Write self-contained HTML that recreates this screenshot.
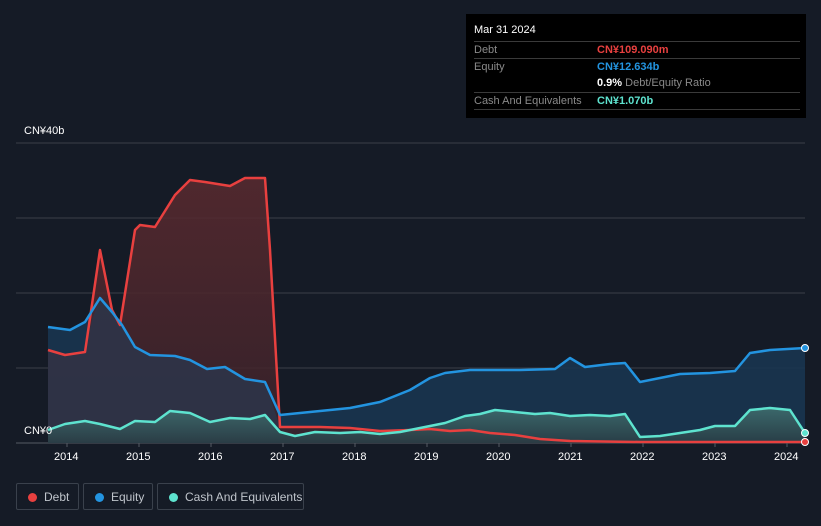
<!DOCTYPE html>
<html><head><meta charset="utf-8"><style>
body{margin:0;width:821px;height:526px;background:#151b26;font-family:"Liberation Sans",sans-serif;overflow:hidden;position:relative}
.tt{position:absolute;left:466px;top:14px;width:340px;height:104px;background:#000;color:#fff;font-size:11px}
.r{position:absolute;left:8px;right:6px;border-top:1px solid #3a3a3a;height:17px;line-height:17px;color:#8a8a8a}
.r span{position:absolute;left:123px;font-weight:bold}
.leg{position:absolute;top:483px;height:27px;border:1px solid #3a414c;border-radius:2px;color:#bfc4cb;font-size:12px;line-height:27px;box-sizing:border-box}
.leg i{position:absolute;left:11px;top:9px;width:9px;height:9px;border-radius:50%}
.leg b{font-weight:normal;position:absolute;left:27px}
.ax{position:absolute;color:#fff;font-size:11px}
</style></head><body>
<svg width="821" height="526" style="position:absolute;left:0;top:0">
<defs>
<linearGradient id="gd" x1="0" y1="0" x2="0" y2="1"><stop offset="0" stop-color="#5a2a2f"/><stop offset="1" stop-color="#3a222a"/></linearGradient>
<linearGradient id="gc" x1="0" y1="0" x2="0" y2="1"><stop offset="0" stop-color="#3f6e6e"/><stop offset="1" stop-color="#2a3e46"/></linearGradient>
</defs>
<g stroke="#3a3f48" stroke-width="1"><line x1="16" y1="143" x2="805" y2="143"/><line x1="16" y1="218" x2="805" y2="218"/><line x1="16" y1="293" x2="805" y2="293"/><line x1="16" y1="368" x2="805" y2="368"/><line x1="16" y1="443" x2="805" y2="443" stroke="#555b64"/></g>
<path fill="#183550" opacity="0.9" d="M48,327 L70,330 85,322 100,298 112,312 122,325 135,347 150,355 175,356 190,360 207,369 225,367 245,379 265,382 280,415 310,412 350,408 380,402 410,390 430,378 445,373 470,370 490,370 520,370 555,369 570,358 585,367 610,364 625,363 640,382 660,378 680,374 710,373 735,371 750,353 770,350 805,348 L805,443 48,443Z"/>
<path fill="url(#gd)" opacity="0.85" d="M48,350 L65,355 85,352 100,250 112,310 120,325 135,230 140,225 155,227 175,195 190,180 205,182 230,186 245,178 265,178 270,250 280,427 320,427 350,428 380,431 410,430 430,429 450,431 470,430 490,433 515,435 540,439 570,441 640,442 805,442 L805,443 48,443Z"/>
<path fill="#2e3448" opacity="0.9" d="M48,350 L65,355 85,352 92,320 100,298 112,312 122,325 135,347 150,355 175,356 190,360 207,369 225,367 245,379 265,382 280,427 L280,443 48,443Z"/>
<path fill="url(#gc)" opacity="0.9" d="M48,430 L65,424 85,421 100,424 120,429 135,421 155,422 170,411 190,413 210,422 230,418 250,419 265,415 280,432 295,436 315,432 340,433 360,432 380,434 400,432 420,428 445,423 465,416 480,414 495,410 515,412 535,414 550,413 570,416 590,415 610,416 625,414 640,437 660,436 680,433 700,430 715,426 735,426 750,410 770,408 790,410 805,433 L805,443 48,443Z"/>
<g fill="none" stroke-width="2.5" stroke-linejoin="round">
<path stroke="#e8403f" d="M48,350 L65,355 85,352 100,250 112,310 120,325 135,230 140,225 155,227 175,195 190,180 205,182 230,186 245,178 265,178 270,250 280,427 320,427 350,428 380,431 410,430 430,429 450,431 470,430 490,433 515,435 540,439 570,441 640,442 805,442"/>
<path stroke="#2394e0" d="M48,327 L70,330 85,322 100,298 112,312 122,325 135,347 150,355 175,356 190,360 207,369 225,367 245,379 265,382 280,415 310,412 350,408 380,402 410,390 430,378 445,373 470,370 490,370 520,370 555,369 570,358 585,367 610,364 625,363 640,382 660,378 680,374 710,373 735,371 750,353 770,350 805,348"/>
<path stroke="#5ee3cf" d="M48,430 L65,424 85,421 100,424 120,429 135,421 155,422 170,411 190,413 210,422 230,418 250,419 265,415 280,432 295,436 315,432 340,433 360,432 380,434 400,432 420,428 445,423 465,416 480,414 495,410 515,412 535,414 550,413 570,416 590,415 610,416 625,414 640,437 660,436 680,433 700,430 715,426 735,426 750,410 770,408 790,410 805,433"/>
</g>
<circle cx="805" cy="348" r="3.5" fill="#2394e0" stroke="#fff" stroke-width="1"/>
<circle cx="805" cy="433" r="3.5" fill="#5ee3cf" stroke="#fff" stroke-width="1"/>
<circle cx="805" cy="442" r="3.5" fill="#e8403f" stroke="#fff" stroke-width="1"/>
<g stroke="#555b64"><line x1="67" y1="443" x2="67" y2="447"/><line x1="139" y1="443" x2="139" y2="447"/><line x1="211" y1="443" x2="211" y2="447"/><line x1="283" y1="443" x2="283" y2="447"/><line x1="355" y1="443" x2="355" y2="447"/><line x1="427" y1="443" x2="427" y2="447"/><line x1="499" y1="443" x2="499" y2="447"/><line x1="571" y1="443" x2="571" y2="447"/><line x1="643" y1="443" x2="643" y2="447"/><line x1="715" y1="443" x2="715" y2="447"/><line x1="787" y1="443" x2="787" y2="447"/></g>
</svg>
<div class="ax" style="left:24px;top:125px">CN¥40b</div>
<div class="ax" style="left:24px;top:425px">CN¥0</div>
<div class="ax" style="left:54px;top:451px">2014</div><div class="ax" style="left:126px;top:451px">2015</div><div class="ax" style="left:198px;top:451px">2016</div><div class="ax" style="left:270px;top:451px">2017</div><div class="ax" style="left:342px;top:451px">2018</div><div class="ax" style="left:414px;top:451px">2019</div><div class="ax" style="left:486px;top:451px">2020</div><div class="ax" style="left:558px;top:451px">2021</div><div class="ax" style="left:630px;top:451px">2022</div><div class="ax" style="left:702px;top:451px">2023</div><div class="ax" style="left:774px;top:451px">2024</div>
<div class="tt">
<div style="position:absolute;left:8px;top:10px">Mar 31 2024</div>
<div class="r" style="top:27px">Debt<span style="color:#e8403f">CN¥109.090m</span></div>
<div class="r" style="top:44px">Equity<span style="color:#2394e0">CN¥12.634b</span></div>
<div class="r" style="top:61px;border-top:none"><span style="color:#fff">0.9% <b style="color:#8a8a8a;font-weight:normal">Debt/Equity Ratio</b></span></div>
<div class="r" style="top:78px">Cash And Equivalents<span style="color:#5ee3cf">CN¥1.070b</span></div>
<div class="r" style="top:95px;height:0"></div>
</div>
<div class="leg" style="left:16px;width:63px"><i style="background:#e8403f"></i><b>Debt</b></div>
<div class="leg" style="left:83px;width:70px"><i style="background:#2394e0"></i><b>Equity</b></div>
<div class="leg" style="left:157px;width:147px"><i style="background:#5ee3cf"></i><b>Cash And Equivalents</b></div>
</body></html>
